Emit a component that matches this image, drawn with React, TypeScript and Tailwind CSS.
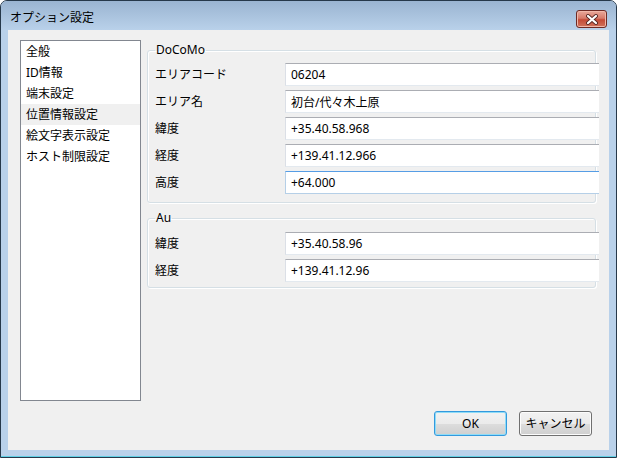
import React from "react";

const font = {
  fontFamily: '"Noto Sans", "Noto Sans CJK JP", sans-serif',
};

const menuItems = [
  "全般",
  "ID情報",
  "端末設定",
  "位置情報設定",
  "絵文字表示設定",
  "ホスト制限設定",
];

type Field = { label: string; value: string; focused?: boolean };

const docomoFields: Field[] = [
  { label: "エリアコード", value: "06204" },
  { label: "エリア名", value: "初台/代々木上原" },
  { label: "緯度", value: "+35.40.58.968" },
  { label: "経度", value: "+139.41.12.966" },
  { label: "高度", value: "+64.000", focused: true },
];

const auFields: Field[] = [
  { label: "緯度", value: "+35.40.58.96" },
  { label: "経度", value: "+139.41.12.96" },
];

const FieldRow = ({ field }: { field: Field }) => (
  <div className="flex items-center h-[23px]">
    <span className="w-[130px] shrink-0 text-[12px] leading-[16px] text-black">
      {field.label}
    </span>
    <input
      defaultValue={field.value}
      className={`w-[330px] shrink-0 h-[23px] pl-[5px] bg-white text-[12px] text-black outline-none border ${
        field.focused
          ? "border-[#b5cfe7] border-t-[#569de5]"
          : "border-[#dbdfe6] border-t-[#abadb3] border-b-[#e3e9ef]"
      }`}
    />
  </div>
);

const GroupBox = ({
  title,
  fields,
  className,
}: {
  title: string;
  fields: Field[];
  className: string;
}) => (
  <fieldset
    className={`min-w-0 w-[449px] border border-[#d5dfe5] rounded-[3px] shadow-[inset_1px_1px_0_#ffffff,1px_1px_0_#ffffff] pl-[7px] ${className}`}
  >
    <legend className="px-[1px] h-[14px] text-[12px] leading-[14px] text-black">
      {title}
    </legend>
    <div className="flex flex-col gap-[4px]">
      {fields.map((f) => (
        <FieldRow key={f.label + f.value} field={f} />
      ))}
    </div>
  </fieldset>
);

const CloseButton = () => (
  <div className="w-[31px] h-[18px] rounded-[3px] border border-[#6e2a24] bg-[linear-gradient(to_bottom,#e9a99b_0%,#d77b6a_45%,#c44a36_55%,#d0735c_100%)] shadow-[inset_0_0_0_1px_#f0b7a9] flex items-center justify-center">
    <svg width="14" height="11" viewBox="0 0 14 11">
      <path
        d="M3 2 L11 9 M11 2 L3 9"
        stroke="#5a2a26"
        strokeWidth="4"
        strokeLinecap="round"
      />
      <path
        d="M3 2 L11 9 M11 2 L3 9"
        stroke="#ffffff"
        strokeWidth="2.2"
        strokeLinecap="round"
      />
    </svg>
  </div>
);

export default function App() {
  return (
    <div
      style={font}
      className="w-[617px] h-[458px] border border-[#26384a] rounded-t-[7px] bg-[#b9d1ea] flex flex-col overflow-hidden"
    >
      {/* title bar */}
      <div className="h-[29px] shrink-0 flex items-start pt-[9px] pl-[9px] pr-[9px] bg-[linear-gradient(to_bottom,#9ab4d1,#b9d1ea)]">
        <span className="text-[12px] leading-[17px] -mt-[1px] text-black">
          オプション設定
        </span>
        <div className="ml-auto">
          <CloseButton />
        </div>
      </div>

      {/* client area */}
      <div className="mx-[7px] h-[420px] shrink-0 bg-[#f0f0f0] flex flex-col">
        <div className="flex pt-[10px] pl-[12px]">
          <div className="w-[121px] h-[361px] shrink-0 border border-[#828790] bg-white">
            {menuItems.map((item, i) => (
              <div
                key={item}
                className={`h-[21px] pl-[5px] text-[12px] leading-[21px] text-black ${
                  i === 3 ? "bg-[#f0f0f0]" : ""
                }`}
              >
                {item}
              </div>
            ))}
          </div>
          <div className="ml-[6px] w-[452px] overflow-hidden flex flex-col">
            <GroupBox
              title="DoCoMo"
              fields={docomoFields}
              className="mt-[3px] pt-[6px] pb-[8px]"
            />
            <GroupBox
              title="Au"
              fields={auFields}
              className="mt-[8px] pt-[7px] pb-[5px]"
            />
          </div>
        </div>

        <div className="flex justify-end gap-[12px] pr-[17px] mt-[10px]">
          <button className="w-[73px] h-[25px] rounded-[3px] border border-[#3399dd] shadow-[inset_0_0_0_1px_#8fdcf7] bg-[linear-gradient(to_bottom,#f2f2f2_0%,#ebebeb_50%,#dddddd_51%,#cfcfcf_100%)] text-[12px] text-black">
            OK
          </button>
          <button className="w-[73px] h-[25px] rounded-[3px] border border-[#707070] shadow-[inset_0_0_0_1px_#fcfcfc] bg-[linear-gradient(to_bottom,#f2f2f2_0%,#ebebeb_50%,#dddddd_51%,#cfcfcf_100%)] text-[12px] text-black">
            キャンセル
          </button>
        </div>
      </div>

      <div className="flex-1 border-b border-[#5fcfe4]" />
    </div>
  );
}
